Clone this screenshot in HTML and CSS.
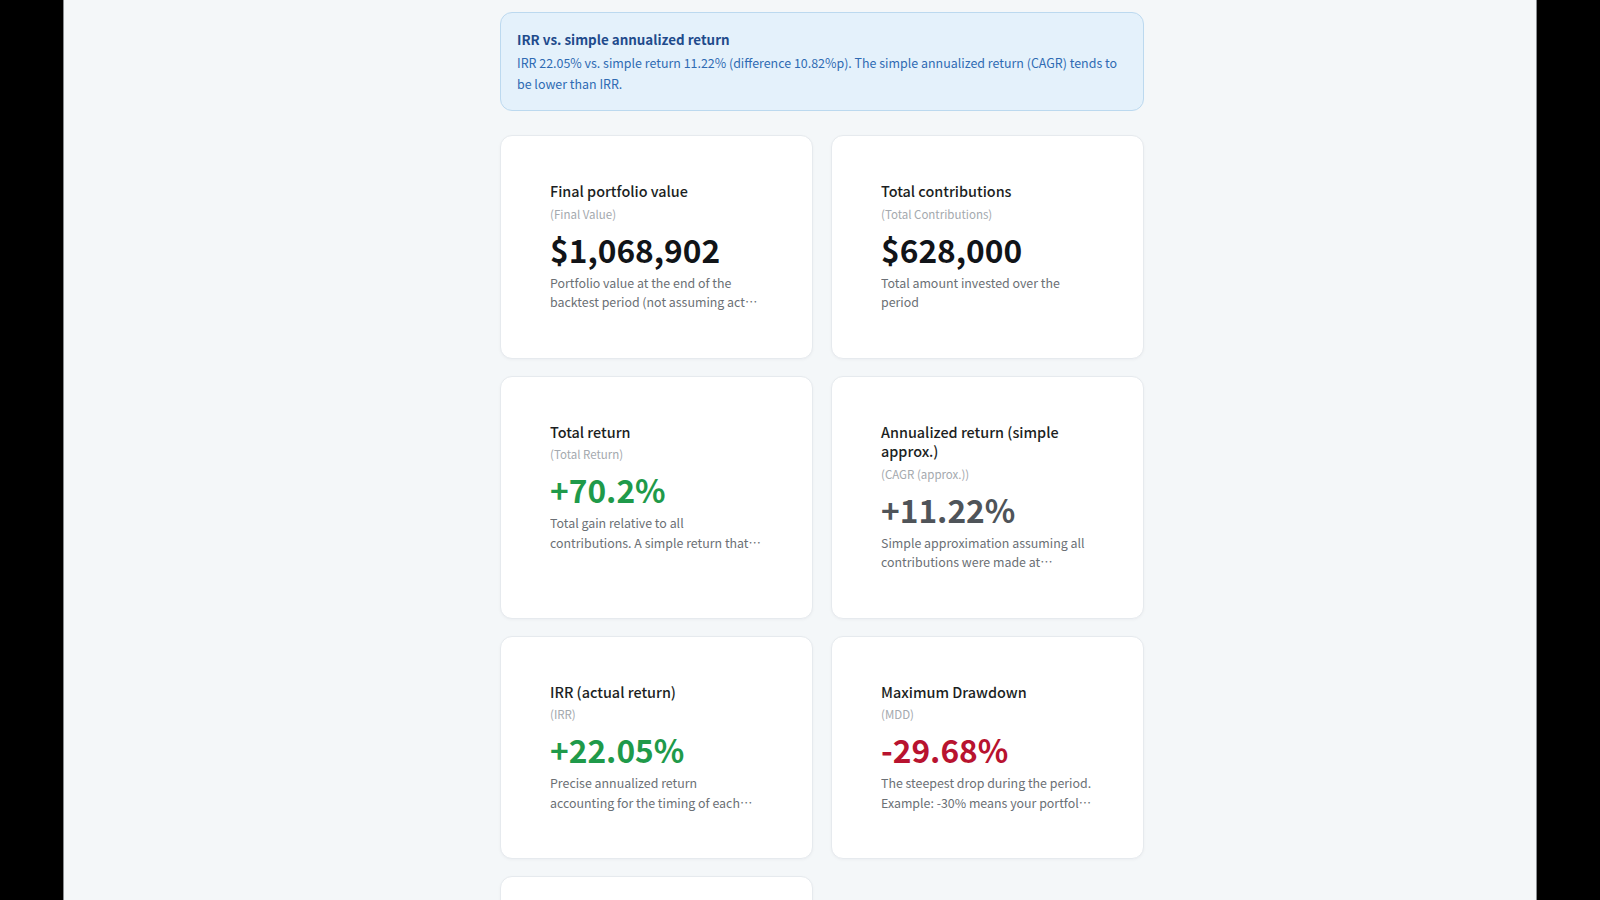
FILE: index.html
```html
<!DOCTYPE html>
<html lang="en">
<head>
    <meta charset="UTF-8"/>
    <meta name="viewport" content="width=device-width, initial-scale=1.0"/>
    <link rel="stylesheet" href="styles.css">
</head>
<body>
<main class="viewport">
    <section class="results">
        <div class="notice">
            <h3 class="notice__title">IRR vs. simple annualized return</h3>
            <p class="notice__text">IRR 22.05% vs. simple return 11.22% (difference 10.82%p). The simple annualized return (CAGR) tends to be lower than IRR.</p>
        </div>

        <div class="metrics">
            <article class="metric">
                <h4 class="metric__title">Final portfolio value</h4>
                <div class="metric__sub">(Final Value)</div>
                <div class="metric__value">$1,068,902</div>
                <p class="metric__desc">Portfolio value at the end of the backtest period (not assuming actual withdrawals or taxes)</p>
            </article>
            <article class="metric">
                <h4 class="metric__title">Total contributions</h4>
                <div class="metric__sub">(Total Contributions)</div>
                <div class="metric__value">$628,000</div>
                <p class="metric__desc">Total amount invested over the period</p>
            </article>
            <article class="metric">
                <h4 class="metric__title">Total return</h4>
                <div class="metric__sub">(Total Return)</div>
                <div class="metric__value metric__value--up">+70.2%</div>
                <p class="metric__desc">Total gain relative to all contributions. A simple return that ignores the timing of each contribution</p>
            </article>
            <article class="metric">
                <h4 class="metric__title">Annualized return (simple approx.)</h4>
                <div class="metric__sub">(CAGR (approx.))</div>
                <div class="metric__value metric__value--muted">+11.22%</div>
                <p class="metric__desc">Simple approximation assuming all contributions were made at<span class="metric__tail">the start of the period</span></p>
            </article>
            <article class="metric">
                <h4 class="metric__title">IRR (actual return)</h4>
                <div class="metric__sub">(IRR)</div>
                <div class="metric__value metric__value--up">+22.05%</div>
                <p class="metric__desc">Precise annualized return accounting for the timing of each contribution</p>
            </article>
            <article class="metric">
                <h4 class="metric__title">Maximum Drawdown</h4>
                <div class="metric__sub">(MDD)</div>
                <div class="metric__value metric__value--down">-29.68%</div>
                <p class="metric__desc">The steepest drop during the period. Example: -30% means your portfolio fell 30% from its peak</p>
            </article>
            <article class="metric">
                <h4 class="metric__title">Volatility</h4>
                <div class="metric__sub">(Volatility)</div>
                <div class="metric__value">18.4%</div>
                <p class="metric__desc">Annualized standard deviation of returns</p>
            </article>
        </div>
    </section>
</main>
</body>
</html>
```

FILE: styles.css
```css
:root {
    --page: #f4f7f9;
    --card: #ffffff;
    --card-border: #e6eaee;
    --ink: #1c1f23;
    --ink-soft: #6b7075;
    --ink-faint: #a4a9ae;
    --up: #1f9a4a;
    --down: #b8132f;
    --muted: #4f5459;
    --info-bg: #e4f1fb;
    --info-border: #bcd9ef;
    --info-title: #1f4b8c;
    --info-text: #2f6bb3;
}

html, body {
    margin: 0;
    height: 100%;
    overflow: hidden;
}

body {
    background: #000000;
    font-family: "Noto Sans CJK KR", "Noto Sans", sans-serif;
    color: var(--ink);
}

.viewport {
    box-sizing: border-box;
    width: 1474px;
    height: 900px;
    margin: 0 auto;
    padding: 12px 0 0 436px;
    background: var(--page);
    border-left: 1px solid #8a8d90;
    border-right: 1px solid #8a8d90;
}

.results {
    width: 644px;
}

.notice {
    box-sizing: border-box;
    padding: 15px 16px 16px;
    background: var(--info-bg);
    border: 1px solid var(--info-border);
    border-radius: 12px;
}

.notice__title {
    margin: 0 0 3px;
    font-size: 13.4px;
    line-height: 22px;
    font-weight: 700;
    color: var(--info-title);
}

.notice__text {
    margin: 0;
    font-size: 12.45px;
    line-height: 20.5px;
    color: var(--info-text);
}

.metrics {
    display: grid;
    grid-template-columns: 1fr 1fr;
    gap: 17px 18px;
    margin-top: 24px;
}

.metric {
    padding: 45px 49px 45px;
    background: var(--card);
    border: 1px solid var(--card-border);
    border-radius: 12px;
    box-shadow: 0 1px 3px rgba(20, 30, 40, 0.04);
}

.metric__title {
    margin: 0;
    font-size: 14.4px;
    line-height: 19.5px;
    font-weight: 500;
    color: var(--ink);
}

.metric__sub {
    margin-top: 4px;
    font-size: 11.5px;
    line-height: 18px;
    color: var(--ink-faint);
}

.metric__value {
    margin-top: 6px;
    font-size: 31.7px;
    line-height: 40px;
    font-weight: 700;
    color: #111418;
}

.metric__value--up {
    color: var(--up);
}

.metric__value--down {
    color: var(--down);
}

.metric__value--muted {
    color: var(--muted);
}

.metric__desc {
    margin: 5px 0 0;
    font-size: 12.4px;
    line-height: 19.5px;
    color: var(--ink-soft);
    display: -webkit-box;
    -webkit-line-clamp: 2;
    -webkit-box-orient: vertical;
    overflow: hidden;
}

/* unbreakable tail so the clamp cuts right after the previous word */
.metric__tail {
    display: inline-block;
    margin-left: 0.25em;
}
```
